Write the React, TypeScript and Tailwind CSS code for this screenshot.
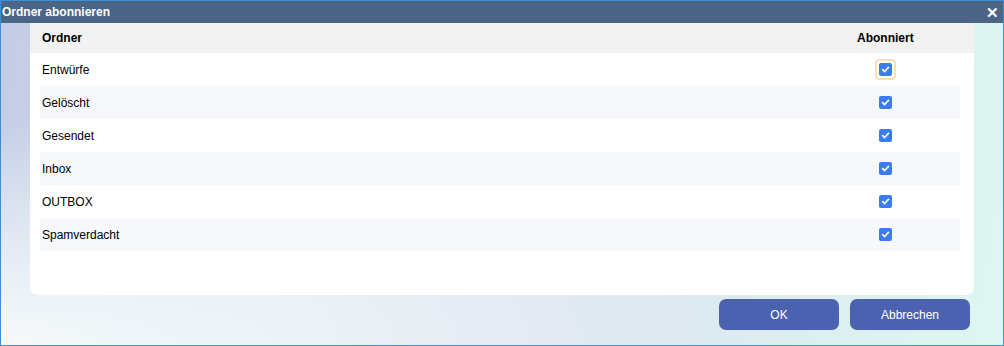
import { useState } from 'react'

const folders = ['Entwürfe', 'Gelöscht', 'Gesendet', 'Inbox', 'OUTBOX', 'Spamverdacht']

function Check({ focused }: { focused?: boolean }) {
  return (
    <span
      className={`flex h-[17px] w-[17px] items-center justify-center rounded-[2px] ${
        focused ? 'ring-2 ring-[#f8e0b8]' : ''
      }`}
    >
      <span className="flex h-[13px] w-[13px] items-center justify-center rounded-[2px] bg-[#3b7cf0]">
        <svg width="9" height="9" viewBox="0 0 10 10" fill="none">
          <path d="M1.8 5.2 L4 7.3 L8.3 2.6" stroke="white" strokeWidth="1.8" strokeLinecap="round" strokeLinejoin="round" />
        </svg>
      </span>
    </span>
  )
}

export default function App() {
  const [checked] = useState(folders.map(() => true))

  return (
    <div
      className="flex h-[346px] w-[1004px] flex-col border border-[#3b8fd6] text-[12px] text-black"
      style={{ fontFamily: '"Liberation Sans", Arial, sans-serif' }}
    >
      <div className="flex h-[22px] shrink-0 items-center justify-between bg-[#4a6585] pl-[1px] pr-[4px]">
        <span className="font-bold text-white">Ordner abonnieren</span>
        <span className="text-[15px] font-bold leading-none text-white">✕</span>
      </div>
      <div className="flex flex-1 flex-col bg-[radial-gradient(ellipse_at_0%_100%,rgba(248,252,252,0.95)_0%,rgba(240,248,250,0.6)_25%,rgba(255,255,255,0)_50%),linear-gradient(100deg,#c3cbe6_0%,#dfe6f2_30%,#dde5f0_60%,#ddf7f1_100%)] px-[29px]">
        <div className="flex h-[272px] flex-col rounded-b-[8px] bg-white">
          <div className="flex h-[30px] items-center bg-[#f2f2f2] font-bold">
            <span className="pl-[12px]">Ordner</span>
            <span className="ml-auto w-[119px] pl-[2px]">Abonniert</span>
          </div>
          <div className="flex flex-col pl-[10px] pr-[14px]">
            {folders.map((f, i) => (
              <div
                key={f}
                className={`flex h-[33px] items-center ${i % 2 === 1 ? 'bg-[#f7f8fc]' : 'bg-white'}`}
              >
                <span className="pl-[2px]">{f}</span>
                <span className="ml-auto mr-[66px] flex">
                  {checked[i] && <Check focused={i === 0} />}
                </span>
              </div>
            ))}
          </div>
        </div>
        <div className="mt-[4px] flex justify-end gap-[11px] pr-[4px]">
          <button className="h-[31px] w-[120px] rounded-[7px] bg-[#4a62b0] text-white">OK</button>
          <button className="h-[31px] w-[120px] rounded-[7px] bg-[#4a62b0] text-white">Abbrechen</button>
        </div>
      </div>
    </div>
  )
}
